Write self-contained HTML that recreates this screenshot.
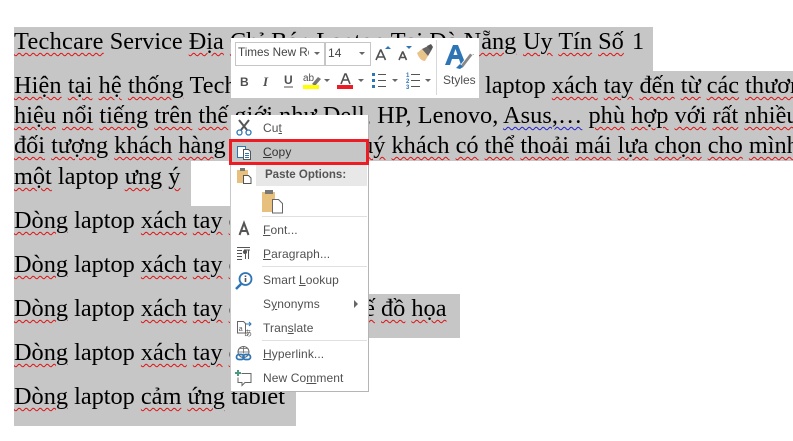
<!DOCTYPE html>
<html><head><meta charset="utf-8"><style>
html,body{margin:0;padding:0;background:#fff}
#p{position:relative;width:793px;height:441px;overflow:hidden;background:#fff}
.g{position:absolute;background:#c6c6c6}
.l{position:absolute;white-space:nowrap;font:24.3px/30px "Liberation Serif",serif;color:#000}
.l s{text-decoration:underline wavy #e01010 1px;text-underline-offset:3px}
.l b{font-weight:400;text-decoration:underline wavy #2020d0 1px;text-underline-offset:3px}
.m{position:absolute;white-space:nowrap;font:12px/16px "Liberation Sans",sans-serif;color:#505050;letter-spacing:.1px}
.m u{text-underline-offset:1px}
.w{position:absolute;background:#fff}
svg{position:absolute;overflow:visible}
</style></head><body><div id="p">
<div class="g" style="left:14px;top:27px;width:639px;height:44px"></div>
<div class="g" style="left:14px;top:71px;width:779px;height:90px"></div>
<div class="g" style="left:14px;top:161px;width:177px;height:45px"></div>
<div class="g" style="left:14px;top:206px;width:220px;height:220px"></div>
<div class="g" style="left:234px;top:294px;width:226px;height:44px"></div>
<div class="g" style="left:234px;top:382px;width:62px;height:44px"></div>

<div class="l" style="left:14px;top:27px"><s style="letter-spacing:.3px">Techcare</s> Service <s>Địa</s> <s>Chỉ</s> <s>Bán</s> Laptop <s>Tại</s> <s>Đà</s> <s>Nẵng</s></div>
<div class="l" style="left:523px;top:27px"><s>Uy</s> <s>Tín</s> <s>Số</s></div>
<div class="l" style="left:632px;top:27px">1</div>
<div class="l" style="left:14px;top:71px;letter-spacing:.1px"><s>Hiện</s> <s>tại</s> <s>hệ</s> <s>thống</s> Techcare</div>
<div class="l" style="left:485px;top:71px">laptop <s>xách</s> <s>tay</s> <s>đến</s> <s>từ</s> <s>các</s> <s>thương</s></div>
<div class="l" style="left:14px;top:101px;letter-spacing:.04px"><s>hiệu</s> <s>nổi</s> <s>tiếng</s> <s>trên</s> <s>thế</s> <s>giới</s> <s>như</s> Dell, HP, Lenovo, <b>Asus,…</b> <s>phù</s> <s>hợp</s> <s>với</s> <s>rất</s> <s>nhiều</s></div>
<div class="l" style="left:14px;top:131px"><s>đối</s> <s>tượng</s> <s>khách</s> <s>hàng</s> <s>khác</s> <s>nhau</s></div>
<div class="l" style="left:349px;top:131px"><s>quý</s> <s>khách</s> <s>có</s> <s>thể</s> <s>thoải</s> <s>mái</s> <s>lựa</s> <s>chọn</s> <s>cho</s> <s>mình</s></div>
<div class="l" style="left:14px;top:162px"><s>một</s> laptop <s>ưng</s> <s>ý</s></div>
<div class="l" style="left:14px;top:206px"><s>Dòng</s> laptop <s>xách</s> <s>tay</s> <s>cho</s></div>
<div class="l" style="left:14px;top:250px"><s>Dòng</s> laptop <s>xách</s> <s>tay</s> <s>cho</s></div>
<div class="l" style="left:14px;top:294px"><s>Dòng</s> laptop <s>xách</s> <s>tay</s> <s>cho</s></div>
<div class="l" style="left:352px;top:294px"><s>kế</s> <s>đồ</s> <s>họa</s></div>
<div class="l" style="left:14px;top:338px"><s>Dòng</s> laptop <s>xách</s> <s>tay</s> <s>cho</s></div>
<div class="l" style="left:14px;top:382px"><s>Dòng</s> laptop <s>cảm</s> <s>ứng</s> tablet</div>

<!-- mini toolbar -->
<div class="w" style="left:231px;top:38px;width:248px;height:60px"></div>
<div style="position:absolute;left:235px;top:42px;width:88px;height:22px;border:1px solid #c6c6c6;background:#fff"></div>
<div style="position:absolute;left:325px;top:42px;width:44px;height:22px;border:1px solid #c6c6c6;background:#fff"></div>
<div class="m" style="left:238px;top:45px;width:71px;overflow:hidden;letter-spacing:0;color:#444;font-size:11.700px">Times New Roman</div>
<div class="m" style="left:328px;top:45px;color:#444">14</div>
<svg style="left:0;top:0" width="793" height="441">
<g fill="#666">
<path d="M314 52h6l-3 3z"/><path d="M359 52h6l-3 3z"/>
<path d="M324 79h6l-3 3z"/><path d="M358 79h6l-3 3z"/>
<path d="M392 79h6l-3 3z"/><path d="M425 79h6l-3 3z"/>
<path d="M469 54h5l-2.500 3z"/>
</g>
<!-- grow/shrink A -->
<g fill="none" stroke="#505050" stroke-width="1.600">
<path d="M376 60l4.500-10h.5l4.500 10M378 57h6"/>
<path d="M399 60l3.500-8h.5l3.500 8M401 57.500h4"/>
</g>
<path d="M385 49l3-3 3 3z" fill="#2e75b6"/><path d="M406 46h6l-3 3z" fill="#2e75b6"/>
<!-- format painter -->
<path d="M417 53l5-4 6 7-3 5q-5 0-8-8z" fill="#e8c48a"/>
<path d="M422 49l6-3 3 5-3 5z" fill="#666"/><path d="M427 46l4-2 2 3-2 4z" fill="#555"/>
<!-- styles A -->
<path d="M445 65l8-20h5l8 20h-5l-2-6h-7l-2 6zM453.500 55h4l-2-6z" fill="#2e75b6" fill-rule="evenodd"/>
<path d="M460 66l10-13 3 2-10 13z" fill="#888" stroke="#fff" stroke-width=".8"/><path d="M456 68l4-4 3 3-3 2z" fill="#2e75b6"/>
<!-- sep -->
<path d="M436.500 40v55" stroke="#d8d8d8"/>
<!-- B I U -->
<text x="240" y="86" font-family="Liberation Sans" font-size="12" font-weight="700" fill="#505050">B</text>
<text x="263" y="86" font-family="Liberation Serif" font-size="13" font-style="italic" font-weight="700" fill="#505050">I</text>
<text x="284" y="84" font-family="Liberation Sans" font-size="12" font-weight="700" fill="#505050">U</text>
<path d="M284 87h9" stroke="#505050"/>
<!-- highlight -->
<text x="303" y="81" font-family="Liberation Sans" font-size="10" fill="#505050">ab</text>
<path d="M312 84l6-7 3 2-6 7z" fill="#777"/>
<rect x="303" y="85" width="16" height="4" fill="#ffff00"/>
<!-- font colour -->
<path d="M341 84l4-10h1l4 10M343 80h5" fill="none" stroke="#505050" stroke-width="1.600"/>
<rect x="337" y="85" width="16" height="4" fill="#ed1c24"/>
<!-- bullets -->
<g fill="#2e75b6"><rect x="372" y="73" width="3" height="3"/><rect x="372" y="79" width="3" height="3"/><rect x="372" y="85" width="3" height="3"/></g>
<path d="M378 74.500h8M378 80.500h8M378 86.500h8M411 74.500h9M411 80.500h9M411 86.500h9" stroke="#555"/>
<text x="406" y="77" font-family="Liberation Sans" font-size="6" font-weight="700" fill="#2e75b6">1</text>
<text x="406" y="83" font-family="Liberation Sans" font-size="6" font-weight="700" fill="#2e75b6">2</text>
<text x="406" y="89" font-family="Liberation Sans" font-size="6" font-weight="700" fill="#2e75b6">3</text>
</svg>
<div class="m" style="left:443px;top:72px;letter-spacing:0">Styles</div>

<!-- context menu -->
<div class="w" style="left:231px;top:115px;width:137px;height:276px;border-right:1px solid #b5b5b5;border-bottom:1px solid #b5b5b5;border-left:1px solid #c8c8c8;box-sizing:content-box;margin-left:-1px"></div>
<div style="position:absolute;left:256px;top:165px;width:111px;height:21px;background:#e8e8e8"></div>
<div style="position:absolute;left:262px;top:216px;width:105px;height:1px;background:#e0e0e0"></div>
<div style="position:absolute;left:262px;top:266px;width:105px;height:1px;background:#e0e0e0"></div>
<div style="position:absolute;left:262px;top:340px;width:105px;height:1px;background:#e0e0e0"></div>
<div style="position:absolute;left:229px;top:139px;width:134px;height:20px;border:3px solid #ed1c24;background:#c6c6c6"></div>

<div class="m" style="left:263px;top:120px">Cu<u>t</u></div>
<div class="m" style="left:263px;top:144px;color:#333"><u>C</u>opy</div>
<div class="m" style="left:265px;top:167px;font-weight:700;color:#555;font-size:11.500px;letter-spacing:0">Paste Options:</div>
<div class="m" style="left:263px;top:222px"><u>F</u>ont...</div>
<div class="m" style="left:263px;top:246px"><u>P</u>aragraph...</div>
<div class="m" style="left:263px;top:272px">Smart <u>L</u>ookup</div>
<div class="m" style="left:263px;top:296px">S<u>y</u>nonyms</div>
<div class="m" style="left:263px;top:320px">Tran<u>s</u>late</div>
<div class="m" style="left:263px;top:346px"><u>H</u>yperlink...</div>
<div class="m" style="left:263px;top:370px">New Co<u>m</u>ment</div>

<svg style="left:0;top:0" width="793" height="441">
<!-- scissors -->
<path d="M239 120l8 10M249 120l-8 10" stroke="#555" stroke-width="2" fill="none"/>
<circle cx="239.500" cy="132.500" r="2.500" fill="none" stroke="#2e75b6" stroke-width="1.300"/>
<circle cx="248.500" cy="132.500" r="2.500" fill="none" stroke="#2e75b6" stroke-width="1.300"/>
<!-- copy -->
<path d="M237.500 146.500h8v11h-8z" fill="#fff" stroke="#2e75b6"/>
<path d="M243.500 149.500h5l2 2v8h-7z" fill="#fff" stroke="#555"/>
<path d="M245 153.500h4M245 155.500h4M245 157.500h4" stroke="#2e75b6"/>
<!-- paste small -->
<rect x="237" y="170" width="11" height="13" fill="#e8c07d"/>
<rect x="240" y="168" width="5" height="3" fill="#777"/>
<path d="M243.500 175.500h5l2.500 2.500v5.500h-7.500z" fill="#fff" stroke="#555"/>
<!-- paste big -->
<rect x="262" y="192" width="13" height="20" fill="#e8c07d"/>
<rect x="265" y="190" width="8" height="4" fill="#777"/>
<path d="M272.500 199.500h6l4 4v9.500h-10z" fill="#fff" stroke="#666"/>
<!-- font A -->
<path d="M239.500 235l4.500-12 4.500 12M241 231h6" fill="none" stroke="#555" stroke-width="2"/>
<!-- paragraph -->
<path d="M237 247.500h13M237 250.500h5M237 253.500h5M237 256.500h5M237 259.500h5" stroke="#555"/>
<path d="M244 250h6M245.500 250v9M248.500 250v9" stroke="#555"/><circle cx="245" cy="252" r="2" fill="#555"/>
<!-- smart lookup -->
<circle cx="245.500" cy="279" r="6" fill="#fff" stroke="#2e75b6" stroke-width="1.800"/>
<path d="M241 284l-5 5" stroke="#2e75b6" stroke-width="2.600"/>
<path d="M245.500 275.500v1.500M245.500 278v4" stroke="#555" stroke-width="1.600"/>
<!-- submenu -->
<path d="M354 300l4 4-4 4z" fill="#666"/>
<!-- translate -->
<path d="M237.500 321.500h6l2 2v9.500h-8z" fill="#fff" stroke="#666"/>
<text x="238.800" y="331" font-family="Liberation Sans" font-size="7" fill="#555">a</text>
<path d="M246 324h5M249 322l2 2-2 2" stroke="#2e75b6" fill="none"/>
<text x="244" y="336" font-family="Noto Sans CJK JP" font-size="8" fill="#555">あ</text>
<!-- hyperlink -->
<circle cx="243.500" cy="352" r="5.500" fill="none" stroke="#666"/>
<path d="M238 352h11M243.500 346.500v7M240 348.500h7" stroke="#666" stroke-width=".8"/>
<rect x="236.500" y="354.500" width="7.500" height="5" rx="2.500" fill="none" stroke="#2e75b6" stroke-width="1.800"/>
<rect x="243" y="354.500" width="7.500" height="5" rx="2.500" fill="none" stroke="#2e75b6" stroke-width="1.800"/>
<!-- comment -->
<path d="M241.500 373.500h9.500v9h-6l-3 3v-3h-4v-5" fill="none" stroke="#666"/>
<path d="M238 370v6M235 373h6" stroke="#4a9a80" stroke-width="2"/>
</svg>
</div></body></html>
